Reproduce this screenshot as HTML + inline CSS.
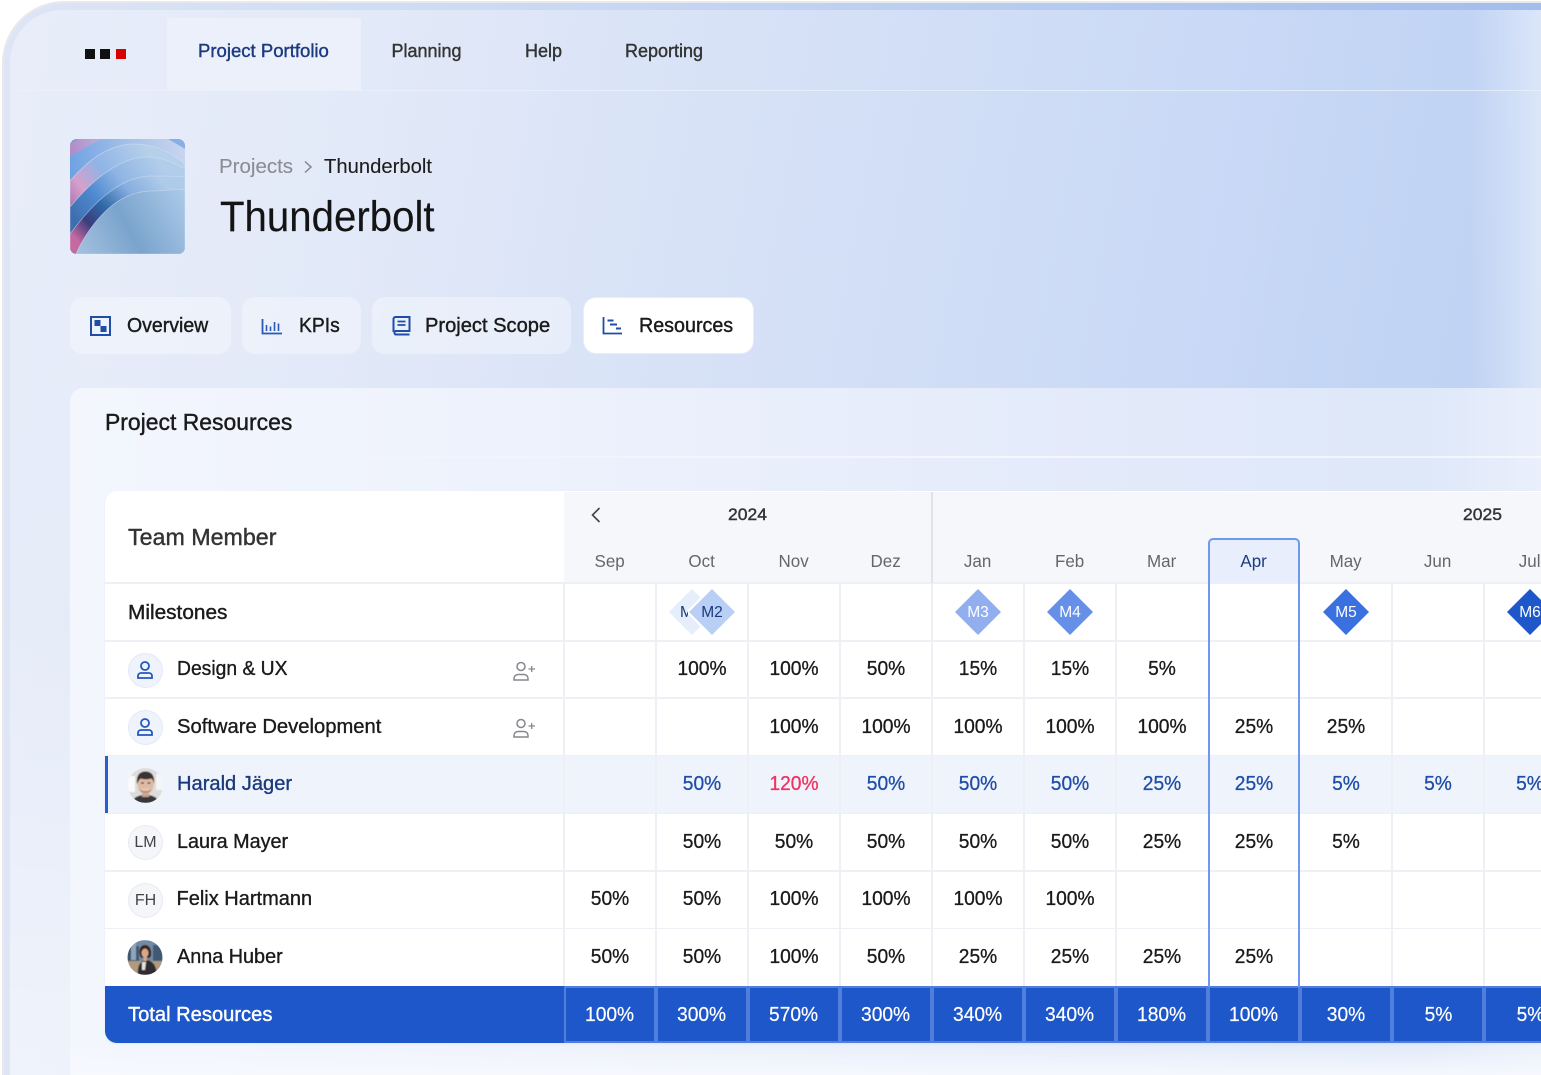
<!DOCTYPE html>
<html><head><meta charset="utf-8"><title>Thunderbolt</title>
<style>
html,body{margin:0;padding:0;width:1541px;height:1075px;overflow:hidden;background:#fff}
body{position:relative;font-family:"Liberation Sans",sans-serif;color:#1a1a1a}
.abs,.t,.r,.v,svg{position:absolute}
.t{white-space:nowrap;transform-origin:left center}
.m{-webkit-text-stroke:.4px currentColor}
.frame{left:2px;top:1px;width:1700px;height:1074px;box-sizing:border-box;border:2px solid #e9e9ea;border-bottom:0;border-right:0;border-radius:62px 0 0 0;background:linear-gradient(90deg,#dde5f6 0,#c8d7f3 35%,#a0bbec 94%,#c8d6f3 100%)}
.screen{left:10px;top:10px;width:1700px;height:1065px;border-radius:52px 0 0 0;background:linear-gradient(100deg,#e8edf9 0,#e2e9f8 20%,#d9e3f7 36%,#cbdaf6 62%,#bbd0f3 88%)}
.tab{top:297px;height:57px;box-sizing:border-box;border-radius:13px;background:rgba(255,255,255,.34)}
.nav{top:41px;font-size:18px;line-height:21px;color:#333}
.lab{font-size:20px;line-height:24px;top:314px;color:#1a1a1a}
.r{left:0;width:1541px;height:58px;line-height:59px;font-size:20px;overflow:hidden}
.v{top:0;width:92px;height:58px;text-align:center;transform:scaleX(.96);-webkit-text-stroke:.3px currentColor}
.a{left:564px}.b{left:656px}.c{left:748px}.d{left:840px}.e{left:932px}.f{left:1024px}.g{left:1116px}.h{left:1208px}.i{left:1300px}.j{left:1392px}.k{left:1484px}
.n{left:176.500px;top:0;-webkit-text-stroke:.35px currentColor}
.hl .v{color:#1f4da8}.hl .n{color:#1a3a7c}
.mon{top:551px;width:92px;margin-left:1px;text-align:center;font-size:17.500px;line-height:20px;color:#666;transform:scaleX(.97)}
.hline{left:105px;width:1436px;height:1.500px;background:#eff0f5}
.vline{top:583px;width:1.500px;height:403px;background:#eff0f5}
.circ{left:128px;width:33px;height:33px;border-radius:50%;border:1px solid #e9ebf1;background:#f5f6f9;text-align:center;font-size:16px;line-height:34px;color:#444}
.blue{background:#eef3fc;border-color:#e3eaf7}
.tot{left:105px;top:986px;width:1436px;height:57px;background:#1e57c9;border-radius:0 0 0 12px}
.tc{top:986px;width:92px;height:57px;box-sizing:border-box;border:2px solid #4f7edd;text-align:center;line-height:54px;color:#fff;font-size:20px}
.tc span{display:inline-block;transform:scaleX(.96);-webkit-text-stroke:.2px #fff}
.dm{top:612.500px;font-size:15.500px;line-height:18px;transform:translate(-50%,-50%);color:#fff;white-space:nowrap}
.clip{left:0;top:0;width:1541px;height:1075px;overflow:hidden}
</style></head><body>
<div class="abs clip">
<div class="abs frame"></div>
<div class="abs screen"></div>
<div class="abs" style="left:1470px;top:10px;width:71px;height:380px;background:linear-gradient(90deg,rgba(226,235,250,0),rgba(226,235,250,.8))"></div>
<div class="abs" style="left:10px;top:400px;width:60px;height:675px;background:linear-gradient(180deg,rgba(255,255,255,0) 30%,rgba(255,255,255,.4))"></div>

<!-- nav -->
<div class="abs" style="left:17px;top:89.500px;width:1524px;height:1.500px;background:rgba(236,241,251,.75)"></div>
<div class="abs" style="left:167px;top:18px;width:194px;height:72px;background:#ebf0fb"></div>
<div class="abs" style="left:85px;top:49px;width:10px;height:10px;background:#111"></div>
<div class="abs" style="left:100px;top:49px;width:10px;height:10px;background:#111"></div>
<div class="abs" style="left:116px;top:49px;width:10px;height:10px;background:#d90000"></div>
<div class="t nav m" style="left:198px;color:#1c3a80;transform:scaleX(1.03)">Project Portfolio</div>
<div class="t nav m" style="left:391.500px;transform:scaleX(1)">Planning</div>
<div class="t nav m" style="left:525px">Help</div>
<div class="t nav m" style="left:625px">Reporting</div>

<!-- thumbnail -->
<svg style="left:70px;top:139px" width="115" height="115" viewBox="0 0 115 115">
<defs>
<clipPath id="cl"><rect width="115" height="115" rx="7"/></clipPath>
<linearGradient id="f0" gradientUnits="userSpaceOnUse" x1="0" y1="10" x2="60" y2="0"><stop offset="0" stop-color="#b08cc8"/><stop offset="1" stop-color="#c9cfea"/></linearGradient>
<linearGradient id="f1" gradientUnits="userSpaceOnUse" x1="0" y1="30" x2="115" y2="15"><stop offset="0" stop-color="#6ea2e3"/><stop offset=".5" stop-color="#a4bfe8"/><stop offset="1" stop-color="#c8d5ee"/></linearGradient>
<linearGradient id="f2" gradientUnits="userSpaceOnUse" x1="0" y1="70" x2="80" y2="15"><stop offset="0" stop-color="#a973ae"/><stop offset=".22" stop-color="#d5a0cc"/><stop offset=".5" stop-color="#8fb4e6"/><stop offset="1" stop-color="#b6d0ea"/></linearGradient>
<linearGradient id="f3" gradientUnits="userSpaceOnUse" x1="8" y1="85" x2="90" y2="25"><stop offset="0" stop-color="#3f6eb0"/><stop offset=".3" stop-color="#4f8ad0"/><stop offset=".6" stop-color="#8fb5e4"/><stop offset="1" stop-color="#b2cdea"/></linearGradient>
<linearGradient id="f4" gradientUnits="userSpaceOnUse" x1="15" y1="110" x2="90" y2="40"><stop offset="0" stop-color="#c46aa0"/><stop offset=".2" stop-color="#3a3d7c"/><stop offset=".42" stop-color="#2f6aa8"/><stop offset=".7" stop-color="#86aee0"/><stop offset="1" stop-color="#aecbe9"/></linearGradient>
<linearGradient id="f5" gradientUnits="userSpaceOnUse" x1="10" y1="115" x2="115" y2="55"><stop offset="0" stop-color="#a4c0de"/><stop offset=".45" stop-color="#7aa4cd"/><stop offset="1" stop-color="#abc9e8"/></linearGradient>
</defs>
<g clip-path="url(#cl)">
<rect width="115" height="115" fill="url(#f0)"/>
<path d="M0 0H8L0 5Z" fill="#6f9fe0"/>
<path d="M98 0H115V10Z" fill="#86afe6"/>
<path d="M0 17L31 0H98L115 10V115H0Z" fill="url(#f1)"/>
<path d="M0 42C12 28 35 5 64 5C85 5 102 14 115 25V115H0Z" fill="url(#f2)" stroke="#d8e4f5" stroke-opacity=".55" stroke-width=".8"/>
<path d="M0 68C15 50 45 18 77 18C92 18 105 24 115 30V115H0Z" fill="url(#f3)" stroke="#d8e4f5" stroke-opacity=".55" stroke-width=".8"/>
<path d="M0 95C15 75 45 37 81 37C95 37 105 37 115 38V115H0Z" fill="url(#f4)" stroke="#d8e4f5" stroke-opacity=".55" stroke-width=".8"/>
<path d="M6 115C15 95 40 53 80 52C95 52 105 50 115 50V115Z" fill="url(#f5)" stroke="#d8e4f5" stroke-opacity=".55" stroke-width=".8"/>
</g></svg>

<!-- titles -->
<div class="t" style="left:219px;top:155px;font-size:20.500px;line-height:24px;color:#8a8d94;-webkit-text-stroke:.1px currentColor">Projects</div>
<svg style="left:302px;top:160px" width="12" height="14" viewBox="0 0 12 14"><path d="M3 1.500 9 7l-6 5.500" fill="none" stroke="#85878d" stroke-width="1.500"/></svg>
<div class="t" style="left:324px;top:155px;font-size:20.500px;line-height:24px;color:#1d1d1d;transform:scaleX(.987);-webkit-text-stroke:.1px currentColor">Thunderbolt</div>
<div class="t" style="left:219.500px;top:192px;font-size:43px;line-height:50px;color:#141414;transform:scaleX(.935);-webkit-text-stroke:.15px currentColor">Thunderbolt</div>

<!-- tabs -->
<div class="abs tab" style="left:70px;width:161px"></div>
<div class="abs tab" style="left:242px;width:119px"></div>
<div class="abs tab" style="left:372px;width:199px"></div>
<div class="abs tab" style="left:583px;width:171px;background:#fff;border:1.500px solid #e6edfb"></div>
<svg style="left:90px;top:316px" width="21" height="20" viewBox="0 0 21 20"><rect x="1" y="1" width="19" height="18" fill="none" stroke="#1f4da8" stroke-width="2"/><rect x="4.500" y="4" width="6" height="6" fill="#1f4da8"/><rect x="10.500" y="10" width="6" height="6" fill="#1f4da8"/></svg>
<div class="t lab m" style="left:127px;transform:scaleX(.975)">Overview</div>
<svg style="left:261px;top:317px" width="21" height="18" viewBox="0 0 21 18" fill="none" stroke="#2a58b4"><path d="M1.500 2v14.500H21" stroke-width="1.800"/><path d="M5.500 8v6M9.500 9.500v4.500M13.500 5v9M17.500 6.500v7.500" stroke-width="1.600"/></svg>
<div class="t lab m" style="left:299px;transform:scaleX(.965)">KPIs</div>
<svg style="left:392px;top:316px" width="19" height="20" viewBox="0 0 19 20" fill="none" stroke="#1f4da8" stroke-width="2"><path d="M1.500 16V3a2 2 0 0 1 2-2h14v14H3.500a2 2 0 0 0 0 3.500h14"/><path d="M5.500 5.500h8M5.500 9h8" stroke-width="1.800"/></svg>
<div class="t lab m" style="left:425px;transform:scaleX(1.005)">Project Scope</div>
<svg style="left:602px;top:316px" width="22" height="20" viewBox="0 0 22 20" fill="none" stroke="#1f4da8" stroke-width="2"><path d="M1.500 1v16.500H20" stroke-width="1.800"/><path d="M5.500 4.500h6M8 8.500h7M14 12.500h5"/></svg>
<div class="t lab m" style="left:639px;transform:scaleX(.985)">Resources</div>

<!-- card -->
<div class="abs" style="left:70px;top:388px;width:1471px;height:687px;border-radius:13px 0 0 0;background:linear-gradient(90deg,#f3f6fd 0,#eef2fc 30%,#e3eafa 70%,#dee8f9 92%,#eaeffb 100%)"></div>
<div class="t m" style="left:105px;top:408px;font-size:23px;line-height:28px;transform:scaleX(.997)">Project Resources</div>
<div class="abs" style="left:105px;top:456px;width:1436px;height:1.500px;background:linear-gradient(90deg,rgba(255,255,255,0) 10%,rgba(255,255,255,.6) 60%)"></div>
<div class="abs" style="left:70px;top:1040px;width:1471px;height:35px;background:linear-gradient(180deg,rgba(247,249,254,0),rgba(247,249,254,.9))"></div>

<!-- table -->
<div class="abs" style="left:105px;top:491px;width:1436px;height:552px;background:#fff;border-radius:12px 0 0 12px;box-shadow:0 1px 2px rgba(80,110,180,.08)"></div>
<div class="abs" style="left:564px;top:492px;width:977px;height:91px;background:#f6f7fa"></div>
<div class="abs" style="left:105px;top:582px;width:1436px;height:1.500px;background:#eff0f5"></div>
<div class="abs" style="left:931px;top:492px;width:1.500px;height:91px;background:#e1e3e9"></div>
<div class="t m" style="left:128px;top:523px;font-size:23px;line-height:28px;color:#333;transform:scaleX(1.01)">Team Member</div>
<svg style="left:589px;top:506px" width="14" height="18" viewBox="0 0 14 18"><path d="M10.500 2 3.500 9l7 7" fill="none" stroke="#444" stroke-width="1.600"/></svg>
<div class="t m" style="left:728px;top:505px;font-size:17px;line-height:20px;color:#333;transform:scaleX(1.03)">2024</div>
<div class="t m" style="left:1463px;top:505px;font-size:17px;line-height:20px;color:#333;transform:scaleX(1.03)">2025</div>

<!-- highlighted row + apr header -->
<div class="abs" style="left:105px;top:755px;width:1436px;height:58px;background:#eff4fc"></div>
<div class="abs" style="left:105px;top:755px;width:3px;height:58px;background:#2b5cd0"></div>
<div class="abs" style="left:1208px;top:538px;width:92px;height:45px;background:#e8eefb;border-radius:5px 5px 0 0"></div>

<div class="t mon a">Sep</div><div class="t mon b">Oct</div><div class="t mon c">Nov</div><div class="t mon d">Dez</div><div class="t mon e">Jan</div><div class="t mon f">Feb</div><div class="t mon g">Mar</div><div class="t mon h" style="color:#1d3b7e">Apr</div><div class="t mon i">May</div><div class="t mon j">Jun</div><div class="t mon k">Jul</div>

<!-- grid lines -->
<div class="abs hline" style="top:640px"></div><div class="abs hline" style="top:697px"></div><div class="abs hline" style="top:754.500px"></div><div class="abs hline" style="top:812.500px"></div><div class="abs hline" style="top:870px"></div><div class="abs hline" style="top:927.500px"></div>
<div class="abs vline" style="left:563px"></div><div class="abs vline" style="left:655px"></div><div class="abs vline" style="left:747px"></div><div class="abs vline" style="left:839px"></div><div class="abs vline" style="left:931px"></div><div class="abs vline" style="left:1023px"></div><div class="abs vline" style="left:1115px"></div><div class="abs vline" style="left:1391px"></div><div class="abs vline" style="left:1483px"></div>

<!-- milestones -->
<div class="t m" style="left:128px;top:601px;font-size:20px;line-height:24px;transform:scaleX(1.04)">Milestones</div>
<svg style="left:660px;top:585px" width="881" height="54" viewBox="660 585 881 54">
<path d="M692 589l23 23-23 23-23-23z" fill="#e6edfb"/>
<path d="M712 586l26 26-26 26-26-26z" fill="#fff"/>
<path d="M712 589l23 23-23 23-23-23z" fill="#b9cff5"/>
<path d="M978 589l23 23-23 23-23-23z" fill="#91aeee"/>
<path d="M1070 589l23 23-23 23-23-23z" fill="#6690e8"/>
<path d="M1346 589l23 23-23 23-23-23z" fill="#3b70e0"/>
<path d="M1530 589l23 23-23 23-23-23z" fill="#1e57c9"/>
</svg>
<div class="abs" style="left:680px;top:600px;width:8px;height:24px;overflow:hidden"><span class="t" style="left:0;top:4px;font-size:15.500px;line-height:18px;color:#1a3a7c">M1</span></div>
<div class="t dm" style="left:712px;color:#1a3a7c">M2</div>
<div class="t dm" style="left:978px">M3</div>
<div class="t dm" style="left:1070px">M4</div>
<div class="t dm" style="left:1346px">M5</div>
<div class="t dm" style="left:1530px">M6</div>

<!-- rows -->
<div class="r" style="top:640px"><div class="t n" style="transform:scaleX(.965)">Design &amp; UX</div><div class="v b">100%</div><div class="v c">100%</div><div class="v d">50%</div><div class="v e">15%</div><div class="v f">15%</div><div class="v g">5%</div></div>
<div class="r" style="top:698px"><div class="t n" style="transform:scaleX(1.01)">Software Development</div><div class="v c">100%</div><div class="v d">100%</div><div class="v e">100%</div><div class="v f">100%</div><div class="v g">100%</div><div class="v h">25%</div><div class="v i">25%</div></div>
<div class="r hl" style="top:755px"><div class="t n" style="transform:scaleX(1.005)">Harald Jäger</div><div class="v b">50%</div><div class="v c" style="color:#f0325f">120%</div><div class="v d">50%</div><div class="v e">50%</div><div class="v f">50%</div><div class="v g">25%</div><div class="v h">25%</div><div class="v i">5%</div><div class="v j">5%</div><div class="v k">5%</div></div>
<div class="r" style="top:813px"><div class="t n" style="transform:scaleX(.99)">Laura Mayer</div><div class="v b">50%</div><div class="v c">50%</div><div class="v d">50%</div><div class="v e">50%</div><div class="v f">50%</div><div class="v g">25%</div><div class="v h">25%</div><div class="v i">5%</div></div>
<div class="r" style="top:870px"><div class="t n">Felix Hartmann</div><div class="v a">50%</div><div class="v b">50%</div><div class="v c">100%</div><div class="v d">100%</div><div class="v e">100%</div><div class="v f">100%</div></div>
<div class="r" style="top:928px"><div class="t n" style="transform:scaleX(.99)">Anna Huber</div><div class="v a">50%</div><div class="v b">50%</div><div class="v c">100%</div><div class="v d">50%</div><div class="v e">25%</div><div class="v f">25%</div><div class="v g">25%</div><div class="v h">25%</div></div>

<!-- avatars -->
<div class="abs circ blue" style="top:653px"></div>
<div class="abs circ blue" style="top:710px"></div>
<svg style="left:135px;top:660px" width="20" height="20" viewBox="0 0 20 20" fill="none" stroke="#2456bd" stroke-width="1.800"><circle cx="10" cy="6" r="4"/><path d="M3 16.500a3 3 0 0 1 3-3.500h8a3 3 0 0 1 3 3.500v1.500H3z"/></svg>
<svg style="left:135px;top:717px" width="20" height="20" viewBox="0 0 20 20" fill="none" stroke="#2456bd" stroke-width="1.800"><circle cx="10" cy="6" r="4"/><path d="M3 16.500a3 3 0 0 1 3-3.500h8a3 3 0 0 1 3 3.500v1.500H3z"/></svg>
<svg style="left:513px;top:661px" width="23" height="20" viewBox="0 0 23 20" fill="none" stroke="#85878d" stroke-width="1.500"><circle cx="8" cy="5.500" r="4"/><path d="M1 19v-1.500a4 4 0 0 1 4-4h6a4 4 0 0 1 4 4V19z"/><path d="M15.500 8h6.500M18.700 5v6" stroke-width="1.300"/></svg>
<svg style="left:513px;top:718px" width="23" height="20" viewBox="0 0 23 20" fill="none" stroke="#85878d" stroke-width="1.500"><circle cx="8" cy="5.500" r="4"/><path d="M1 19v-1.500a4 4 0 0 1 4-4h6a4 4 0 0 1 4 4V19z"/><path d="M15.500 8h6.500M18.700 5v6" stroke-width="1.300"/></svg>

<svg style="left:128px;top:768px" width="35" height="35" viewBox="0 0 35 35"><defs><clipPath id="av1"><circle cx="17.500" cy="17.500" r="17.500"/></clipPath><filter id="sf"><feGaussianBlur stdDeviation=".4"/></filter></defs><g clip-path="url(#av1)"><g filter="url(#sf)"><rect width="35" height="35" fill="#dcdcda"/><rect x="0" y="8" width="7" height="16" fill="#fafafa"/><rect x="28" y="6" width="7" height="16" fill="#f4f5f4"/><path d="M4 35c1-6 7-8 13.500-8S30 29 31 35z" fill="#37383a"/><rect x="14" y="22" width="7" height="7" fill="#c9a08a"/><ellipse cx="17.500" cy="16" rx="8" ry="10" fill="#dfb9a2"/><path d="M9 16C8 7 12 3.500 17.500 3.500S27 7 26 16c-.5-3-1.500-5-3-5.500-3 1-7 1-10 0-1.500.5-2.500 2.500-4 5.500z" fill="#3a3330"/><path d="M11.500 21c2 3.500 10 3.500 12 0-1 5-11 5-12 0z" fill="#8f7466"/><path d="M13 20c3 1.500 6 1.500 9 0-1 2-8 2-9 0z" fill="#f7f2ee"/><path d="M13 15h2.800M19.500 15h2.800" stroke="#2d2d2d" stroke-width="1.200"/></g></g></svg>
<div class="abs circ" style="top:825px">LM</div>
<div class="abs circ" style="top:883px">FH</div>
<svg style="left:127px;top:940px" width="36" height="35" viewBox="0 0 36 35"><defs><clipPath id="av2"><circle cx="18" cy="17.500" r="17.500"/></clipPath></defs><g clip-path="url(#av2)"><g filter="url(#sf)"><rect width="36" height="35" fill="#6f8ba6"/><rect x="0" y="6" width="12" height="15" fill="#40566c"/><rect x="4" y="2" width="5" height="18" fill="#8ea6bc"/><rect x="26" y="5" width="10" height="16" fill="#3f5a74"/><rect y="21" width="36" height="14" fill="#b09a80"/><path d="M11 35c-1-8 2-14 7-15 6 0 11 3 12 15z" fill="#2d2f33"/><path d="M15 30l0-8 4 0-1 8z" fill="#e8e2d8"/><path d="M13 16c-2-7 1-11 5-11s7 4 6 11c-1 2-2 2-3 2h-5c-1 0-2 0-3-2z" fill="#3d2419"/><ellipse cx="18" cy="13" rx="3.500" ry="4.500" fill="#d6a88e"/><rect x="16.300" y="16" width="3.500" height="5" fill="#d6a88e"/></g></g></svg>

<!-- total -->
<div class="abs tot"></div>
<div class="t m" style="left:128px;top:1003px;font-size:20px;line-height:24px;color:#fff;transform:scaleX(1.007)">Total Resources</div>
<div class="abs tc a"><span>100%</span></div><div class="abs tc b"><span>300%</span></div><div class="abs tc c"><span>570%</span></div><div class="abs tc d"><span>300%</span></div><div class="abs tc e"><span>340%</span></div><div class="abs tc f"><span>340%</span></div><div class="abs tc g"><span>180%</span></div><div class="abs tc h"><span>100%</span></div><div class="abs tc i"><span>30%</span></div><div class="abs tc j"><span>5%</span></div><div class="abs tc k"><span>5%</span></div>

<!-- apr outline -->
<div class="abs" style="left:1208px;top:538px;width:92px;height:449px;box-sizing:border-box;border:2px solid #6f99ee;border-bottom:0;border-radius:5px 5px 0 0"></div>
</div>
</body></html>
